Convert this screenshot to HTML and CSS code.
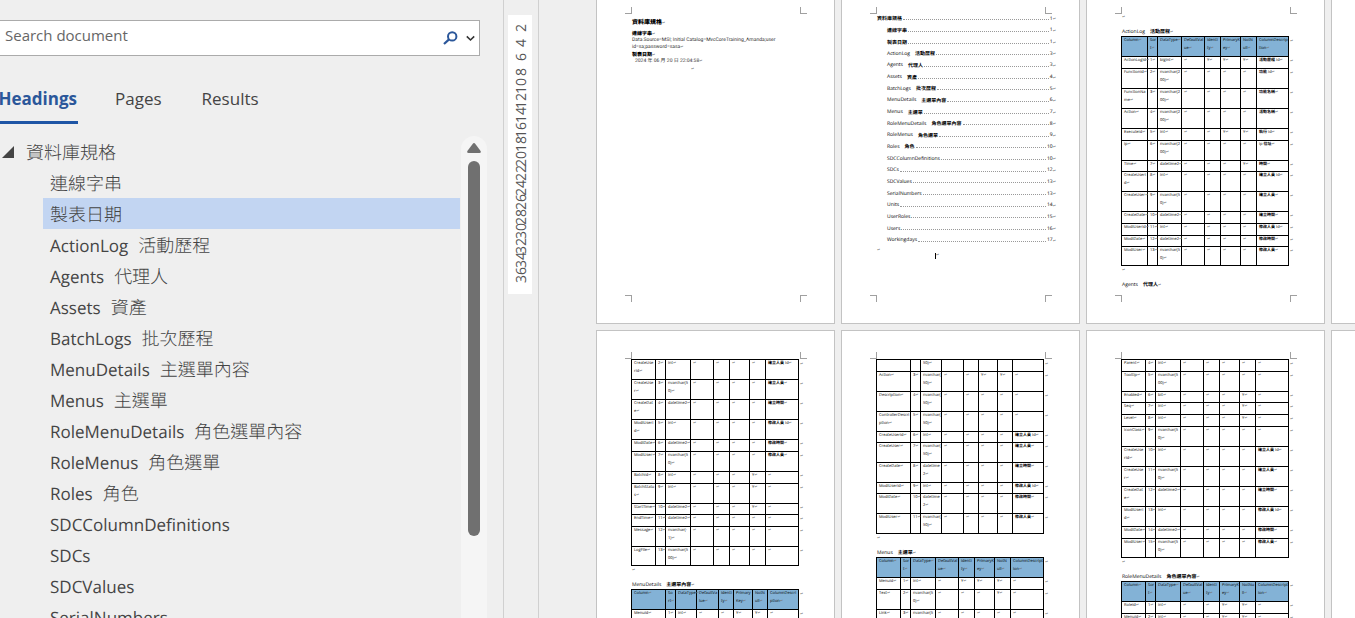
FILE: index.html
```html
<!DOCTYPE html>
<html lang="zh-Hant">
<head>
<meta charset="utf-8">
<meta name="viewport" content="width=device-width, initial-scale=1">
<title>資料庫規格</title>
<link rel="stylesheet" href="styles.css">
</head>
<body>
<aside class="nav">
  <form class="search">
    <input class="search-text" type="text" placeholder="Search document" aria-label="Search document">
    <button class="icon-button" type="button" aria-label="Search">
      <svg width="15" height="14" viewBox="0 0 15 14"><circle cx="9.2" cy="5.4" r="4.2" fill="none" stroke="#2b579a" stroke-width="2"/><path d="M6 8.4 1 13" fill="none" stroke="#2b579a" stroke-width="2.2"/></svg>
    </button>
    <button class="icon-button" type="button" aria-label="Search options">
      <svg width="9" height="7" viewBox="0 0 9 7"><path d="M.8 1.4 4.5 5 8.2 1.4" fill="none" stroke="#333" stroke-width="1.6"/></svg>
    </button>
  </form>
  <div class="tabs" role="tablist">
    <button class="tab active" type="button" role="tab" aria-selected="true">Headings</button>
    <button class="tab" type="button" role="tab" aria-selected="false">Pages</button>
    <button class="tab" type="button" role="tab" aria-selected="false">Results</button>
  </div>
  <div class="outline">
    <div class="tree">
      <a class="root" href="#"><svg width="12" height="12" viewBox="0 0 12 12"><path d="M12 0v12H0z" fill="#444"/></svg><b>資料庫規格</b></a>
      <a href="#"><b>連線字串</b></a>
      <a class="selected" href="#"><b>製表日期</b></a>
      <a href="#">ActionLog<b>活動歷程</b></a>
      <a href="#">Agents<b>代理人</b></a>
      <a href="#">Assets<b>資產</b></a>
      <a href="#">BatchLogs<b>批次歷程</b></a>
      <a href="#">MenuDetails<b>主選單內容</b></a>
      <a href="#">Menus<b>主選單</b></a>
      <a href="#">RoleMenuDetails<b>角色選單內容</b></a>
      <a href="#">RoleMenus<b>角色選單</b></a>
      <a href="#">Roles<b>角色</b></a>
      <a href="#">SDCColumnDefinitions</a>
      <a href="#">SDCs</a>
      <a href="#">SDCValues</a>
      <a href="#">SerialNumbers</a>
    </div>
    <div class="scrollbar">
      <svg width="14" height="10" viewBox="0 0 14 10"><path d="M5.6 1Q7-.8 8.400 1L13.600 8Q14.400 10 12.500 10H1.500Q-.4 10 .4 8z" fill="#707070"/></svg>
      <div class="thumb"></div>
    </div>
  </div>
</aside>
<div class="ruler">
  <div class="scale"><span>36</span><span>34</span><span>32</span><span>30</span><span>28</span><span>26</span><span>24</span><span>22</span><span>20</span><span>18</span><span>16</span><span>14</span><span>12</span><span>10</span><span>8</span><span>6</span><span>4</span><span>2</span></div>
</div>
<main class="canvas">
  <section class="page cover">
    <i class="c tl"></i><i class="c tr"></i><i class="c bl"></i><i class="c br"></i>
    <h1>資料庫規格</h1>
    <h2>連線字串</h2>
    <p>Data Source=MSI; Initial Catalog=MvcCoreTraining_Amanda;user<br>id=sa;password=sasa<span class="m"></span></p>
    <h2>製表日期</h2>
    <p class="date">2024 年 06 月 20 日 22:04:58<span class="m"></span></p>
    <p class="end"><span class="m"></span></p>
  </section>

  <section class="page">
    <i class="c tl"></i><i class="c tr"></i><i class="c bl"></i><i class="c br"></i>
    <nav class="toc">
      <a class="cjk top" href="#"><b>資料庫規格</b><i></i>1</a>
      <a class="cjk" href="#"><b>連線字串</b><i></i>1</a>
      <a class="cjk" href="#"><b>製表日期</b><i></i>1</a>
      <a href="#">ActionLog<b>活動歷程</b><i></i>3</a>
      <a href="#">Agents<b>代理人</b><i></i>3</a>
      <a href="#">Assets<b>資產</b><i></i>4</a>
      <a href="#">BatchLogs<b>批次歷程</b><i></i>5</a>
      <a href="#">MenuDetails<b>主選單內容</b><i></i>6</a>
      <a href="#">Menus<b>主選單</b><i></i>7</a>
      <a href="#">RoleMenuDetails<b>角色選單內容</b><i></i>8</a>
      <a href="#">RoleMenus<b>角色選單</b><i></i>9</a>
      <a href="#">Roles<b>角色</b><i></i>10</a>
      <a href="#">SDCColumnDefinitions<i></i>10</a>
      <a href="#">SDCs<i></i>12</a>
      <a href="#">SDCValues<i></i>13</a>
      <a href="#">SerialNumbers<i></i>13</a>
      <a href="#">Units<i></i>14</a>
      <a href="#">UserRoles<i></i>15</a>
      <a href="#">Users<i></i>16</a>
      <a href="#">Workingdays<i></i>17</a>
    </nav>
    <p class="blank"><span class="m"></span></p>
    <p class="cursor"><span class="m"></span></p>
  </section>

  <section class="page">
    <i class="c tl"></i><i class="c tr"></i><i class="c bl"></i><i class="c br"></i>
    <p class="blank first"><span class="m"></span></p>
    <h3>ActionLog<b>活動歷程</b></h3>
    <table class="sizes-c">
      <colgroup><col><col><col><col><col><col><col><col><col></colgroup>
      <thead><tr><th>Column<th>Sor<br>t<th>DataType<th>DefaultVal<br>ue<th>Identi<br>ty<th>PrimaryK<br>ey<th>NotN<br>ull<th>ColumnDescrip<br>tion</tr></thead>
      <tbody>
      <tr><td>ActionLogId<td>1<td>bigint<td><td>Y<td>Y<td>Y<td><b>活動歷程</b> Id</tr>
      <tr><td>FunctionId<td>2<td>nvarchar(2<br>00)<td><td><td><td><td><b>功能</b> Id</tr>
      <tr><td>FunctionNa<br>me<td>3<td>nvarchar(2<br>00)<td><td><td><td><td><b>功能名稱</b></tr>
      <tr><td>Action<td>4<td>nvarchar(2<br>00)<td><td><td><td><td><b>活動名稱</b></tr>
      <tr><td>ExecuteId<td>5<td>int<td><td><td>Y<td>Y<td><b>執行</b> Id</tr>
      <tr><td>Ip<td>6<td>nvarchar(2<br>00)<td><td><td><td><td>Ip <b>位址</b></tr>
      <tr class="tight"><td>Time<td>7<td>datetime2<td><td><td><td>Y<td><b>時間</b></tr>
      <tr><td>CreateUserI<br>d<td>8<td>int<td><td><td><td><td><b>建立人員</b> Id</tr>
      <tr><td>CreateUser<td>9<td>nvarchar(5<br>0)<td><td><td><td><td><b>建立人員</b></tr>
      <tr><td>CreateDate<td>10<td>datetime2<td><td><td><td><td><b>建立時間</b></tr>
      <tr><td>ModiUserId<td>11<td>int<td><td><td><td><td><b>修改人員</b> Id</tr>
      <tr class="tight"><td>ModiDate<td>12<td>datetime2<td><td><td><td><td><b>修改時間</b></tr>
      <tr class="tight"><td>ModiUser<td>13<td>nvarchar(5<br>0)<td><td><td><td><td><b>修改人員</b></tr>
      </tbody>
    </table>
    <p class="blank"><span class="m"></span></p>
    <h3>Agents<b>代理人</b></h3>
  </section>
  <section class="page"></section>

  <section class="page">
    <i class="c tl"></i><i class="c tr"></i><i class="c bl"></i><i class="c br"></i>
    <table class="sizes-a">
      <colgroup><col><col><col><col><col><col><col><col><col></colgroup>
      <tbody>
      <tr><td>CreateUse<br>rId<td>2<td>int<td><td><td><td><td><b>建立人員</b> Id</tr>
      <tr><td>CreateUse<br>r<td>3<td>nvarchar(5<br>0)<td><td><td><td><td><b>建立人員</b></tr>
      <tr><td>CreateDat<br>e<td>4<td>datetime2<td><td><td><td><td><b>建立時間</b></tr>
      <tr><td>ModiUserI<br>d<td>5<td>int<td><td><td><td><td><b>修改人員</b> Id</tr>
      <tr><td>ModiDate<td>6<td>datetime2<td><td><td><td><td><b>修改時間</b></tr>
      <tr><td>ModiUser<td>7<td>nvarchar(5<br>0)<td><td><td><td><td><b>修改人員</b></tr>
      <tr><td>BatchId<td>8<td>int<td><td><td><td>Y<td></tr>
      <tr><td>BatchStatu<br>s<td>9<td>int<td><td><td><td>Y<td></tr>
      <tr class="tight"><td>StartTime<td>10<td>datetime2<td><td><td><td>Y<td></tr>
      <tr><td>EndTime<td>11<td>datetime2<td><td><td><td><td></tr>
      <tr><td>Message<td>12<td>nvarchar(-<br>1)<td><td><td><td><td></tr>
      <tr class="tight"><td>LogFile<td>13<td>nvarchar(5<br>00)<td><td><td><td><td></tr>
      </tbody>
    </table>
    <p class="blank"><span class="m"></span></p>
    <h3>MenuDetails<b>主選單內容</b></h3>
    <table class="sizes-b">
      <colgroup><col><col><col><col><col><col><col><col><col></colgroup>
      <thead><tr><th>Column<th>So<br>rt<th>DataType<th>DefaultVa<br>lue<th>Identi<br>ty<th>Primary<br>Key<th>NotN<br>ull<th>ColumnDescri<br>ption</tr></thead>
      <tbody>
      <tr><td>MenuId<td>1<td>int<td><td><td>Y<td>Y<td></tr>
      </tbody>
    </table>
  </section>

  <section class="page">
    <i class="c tl"></i><i class="c tr"></i><i class="c bl"></i><i class="c br"></i>
    <table class="sizes-b">
      <colgroup><col><col><col><col><col><col><col><col><col></colgroup>
      <tbody>
      <tr class="rest"><td><td><td>50)<td><td><td><td><td></tr>
      <tr><td>Action<td>3<td>nvarchar(<br>50)<td><td><td>Y<td>Y<td></tr>
      <tr><td>Description<td>4<td>nvarchar(<br>50)<td><td><td><td><td></tr>
      <tr><td>ControllerDescri<br>ption<td>5<td>nvarchar(<br>50)<td><td><td><td><td></tr>
      <tr class="tight"><td>CreateUserId<td>6<td>int<td><td><td><td><td><b>建立人員</b> Id</tr>
      <tr><td>CreateUser<td>7<td>nvarchar(<br>50)<td><td><td><td><td><b>建立人員</b></tr>
      <tr><td>CreateDate<td>8<td>datetime<br>2<td><td><td><td><td><b>建立時間</b></tr>
      <tr class="tight"><td>ModiUserId<td>9<td>int<td><td><td><td><td><b>修改人員</b> Id</tr>
      <tr><td>ModiDate<td>10<td>datetime<br>2<td><td><td><td><td><b>修改時間</b></tr>
      <tr><td>ModiUser<td>11<td>nvarchar(<br>50)<td><td><td><td><td><b>修改人員</b></tr>
      </tbody>
    </table>
    <p class="blank"><span class="m"></span></p>
    <h3>Menus<b>主選單</b></h3>
    <table class="sizes-a">
      <colgroup><col><col><col><col><col><col><col><col><col></colgroup>
      <thead><tr><th>Column<th>Sor<br>t<th>DataType<th>DefaultVal<br>ue<th>Identi<br>ty<th>PrimaryK<br>ey<th>NotN<br>ull<th>ColumnDescript<br>ion</tr></thead>
      <tbody>
      <tr><td>MenuId<td>1<td>int<td><td>Y<td>Y<td>Y<td></tr>
      <tr><td>Text<td>2<td>nvarchar(5<br>0)<td><td><td><td>Y<td></tr>
      <tr><td>Link<td>3<td>nvarchar(5<br>00)<td><td><td><td><td></tr>
      </tbody>
    </table>
  </section>

  <section class="page">
    <i class="c tl"></i><i class="c tr"></i><i class="c bl"></i><i class="c br"></i>
    <table class="sizes-a">
      <colgroup><col><col><col><col><col><col><col><col><col></colgroup>
      <tbody>
      <tr><td>Parent<td>4<td>int<td><td><td><td><td></tr>
      <tr><td>Tooltip<td>5<td>nvarchar(5<br>00)<td><td><td><td><td></tr>
      <tr class="tight"><td>Enabled<td>6<td>bit<td><td><td><td>Y<td></tr>
      <tr><td>Seq<td>7<td>int<td><td><td><td>Y<td></tr>
      <tr><td>Level<td>8<td>int<td><td><td><td>Y<td></tr>
      <tr><td>IconClass<td>9<td>nvarchar(5<br>0)<td><td><td><td><td></tr>
      <tr><td>CreateUse<br>rId<td>10<td>int<td><td><td><td><td><b>建立人員</b> Id</tr>
      <tr><td>CreateUse<br>r<td>11<td>nvarchar(5<br>0)<td><td><td><td><td><b>建立人員</b></tr>
      <tr><td>CreateDat<br>e<td>12<td>datetime2<td><td><td><td><td><b>建立時間</b></tr>
      <tr><td>ModiUserI<br>d<td>13<td>int<td><td><td><td><td><b>修改人員</b> Id</tr>
      <tr><td>ModiDate<td>14<td>datetime2<td><td><td><td><td><b>修改時間</b></tr>
      <tr class="tight"><td>ModiUser<td>15<td>nvarchar(5<br>0)<td><td><td><td><td><b>修改人員</b></tr>
      </tbody>
    </table>
    <p class="blank"><span class="m"></span></p>
    <h3>RoleMenuDetails<b>角色選單內容</b></h3>
    <table class="sizes-a">
      <colgroup><col><col><col><col><col><col><col><col><col></colgroup>
      <thead><tr><th>Column<th>Sor<br>t<th>DataType<th>DefaultVal<br>ue<th>Identi<br>ty<th>PrimaryK<br>ey<th>NotNu<br>ll<th>ColumnDescript<br>ion</tr></thead>
      <tbody>
      <tr><td>RoleId<td>1<td>int<td><td><td>Y<td>Y<td></tr>
      <tr><td>MenuId<td>2<td>int<td><td><td>Y<td>Y<td></tr>
      </tbody>
    </table>
  </section>
  <section class="page"></section>
</main>
</body>
</html>
```

FILE: styles.css
```css
* { box-sizing: border-box; }

body {
  margin: 0;
  height: 100vh;
  display: flex;
  overflow: hidden;
  background: #efefef;
  color: #444;
  font-family: "Open Sans", "Noto Sans CJK TC", sans-serif;
  text-rendering: geometricPrecision;
}

a { color: inherit; text-decoration: none; }
button { border: 0; padding: 0; background: none; font: inherit; color: inherit; }

/* Navigation pane */
.nav {
  flex: 0 0 504px;
  display: flex;
  flex-direction: column;
  border-right: 1px solid #d0d0d0;
  overflow: hidden;
}

.search {
  display: flex;
  align-items: center;
  gap: 8px;
  height: 36px;
  margin: 20px 23px 0 0;
  padding-right: 4px;
  border: 1px solid #ababab;
  border-left: 0;
  background: #fff;
}
.search-text {
  flex: 1;
  min-width: 0;
  border: 0;
  outline: 0;
  padding: 0 0 6px 5px;
  background: none;
  font: 15px "Open Sans", sans-serif;
}
.search-text::placeholder { color: #666; opacity: 1; }
.icon-button { display: flex; }

.tabs {
  display: flex;
  gap: 37px;
  margin-top: 22px;
  height: 46px;
  font-size: 17px;
}
.tab { height: 46px; padding-bottom: 6px; }
.tab + .tab + .tab { margin-left: 3px; }
.tab.active {
  width: 78px;
  display: flex;
  justify-content: flex-end;
  align-items: center;
  border-bottom: 3px solid #1e55a5;
  padding: 0 1px 2px 0;
  color: #2b579a;
  font-weight: 700;
}

.outline { flex: 1; min-height: 0; display: flex; margin-top: 12px; }
.tree { flex: 1; overflow: hidden; font-size: 17px; }
.tree a {
  display: flex;
  align-items: center;
  gap: 10px;
  height: 31px;
  margin-left: 43px;
  padding: 1px 0 0 7px;
}
.tree b { font-size: 18px; font-weight: 300; font-family: "Noto Sans CJK TC", sans-serif; }
.tree .root { margin-left: 2px; padding-left: 0; gap: 12px; }
.tree .selected { background: #c2d5f2; }

.scrollbar {
  width: 26px;
  margin: 0 16px 0 1px;
  padding-top: 7px;
  display: flex;
  flex-direction: column;
  align-items: center;
  gap: 8px;
  border-radius: 13px 13px 0 0;
  background: #f5f5f5;
}
.scrollbar svg { flex: none; }
.thumb { width: 12px; height: 79%; border-radius: 6px; background: #707070; }

/* Vertical ruler */
.ruler { flex: 0 0 35px; border-right: 1px solid #d0d0d0; padding: 15px 6px 0 4px; }
.scale {
  height: 279px;
  width: 24px;
  padding: 12px 0 6px;
  display: flex;
  writing-mode: vertical-rl;
  transform: rotate(180deg);
  background: #fff;
  color: #555;
  font-size: 14px;
  line-height: 27px;
}
.scale span { flex: 1 1 0; min-height: 0; display: flex; justify-content: center; }

/* Page thumbnails */
.canvas {
  flex: 1;
  min-width: 0;
  display: grid;
  grid-template-columns: repeat(4, 239px);
  grid-auto-rows: 339px;
  gap: 6px;
  align-content: start;
  margin-top: -15px;
  padding-left: 57px;
  overflow: hidden;
  color: #000;
  font-size: 4px;
  line-height: 8px;
}
.page {
  position: relative;
  padding: 28px 28px 0 34px;
  border: 1px solid #c3c3c3;
  background: #fff;
  overflow: hidden;
}
.page b { font-family: "Noto Sans CJK TC", sans-serif; line-height: 1px; }

/* Margin corner marks */
.c { position: absolute; width: 7px; height: 7px; border: 0 solid #a0a0a0; }
.tl { left: 28px; top: 21px; border-width: 0 1px 1px 0; }
.tr { right: 27px; top: 21px; border-width: 0 0 1px 1px; }
.bl { left: 28px; bottom: 21px; border-width: 1px 1px 0 0; }
.br { right: 27px; bottom: 21px; border-width: 1px 0 0 1px; }

.page h1, .page h2, .page h3, .page p { margin: 0; white-space: nowrap; }
.m::after, .page h1::after, .page h2::after, .page h3::after, .page td::after, .page th::after, .page tr::after, .toc a::after {
  content: "↵";
  color: #777;
  font: 400 4px/1px "DejaVu Sans", sans-serif;
}

.cover { padding-left: 35px; font-family: Roboto, "Noto Sans CJK TC", sans-serif; font-size: 5px; line-height: 7px; }
.cover h1, .cover h2 { font-family: "Noto Sans CJK TC", sans-serif; font-weight: 900; }
.cover h1 { font-size: 6px; line-height: 16px; }
.cover h2 { font-size: 5px; line-height: 7px; }
.cover p { height: 7px; color: #333; }
.cover h2 + p:not(.date) { height: 14px; }
.cover .date { padding-left: 3px; }
.cover .end { padding-left: 59px; margin-top: 1px; }

.toc {
  display: grid;
  grid-auto-rows: 1fr;
  height: 233px;
  margin: -1px -5px 0 1px;
  font-size: 5px;
}
.toc a { display: flex; align-items: center; margin-left: 10px; white-space: nowrap; }
.toc .top { margin-left: 0; }
.toc b { margin-left: 5px; }
.toc .cjk b { margin-left: 0; }
.toc i { flex: 1; height: 3px; margin: 0 1px; border-bottom: 1px dotted #999; }

.blank { height: 12px; padding: 1px 0 0 1px; }
.blank.first { height: 11px; padding-top: 0; }
.toc + .blank { height: 7px; }
.page .cursor { margin-left: 59px; height: 6px; line-height: 6px; border-left: 1px solid #000; }

.page h3 { height: 11px; padding-left: 1px; font-size: 5px; font-weight: 400; line-height: 14px; }
.page h3 b { margin-left: 5px; }

table { width: 174px; table-layout: fixed; border-collapse: collapse; }
td, th {
  padding: 0 0 3px 2px;
  border: 1px solid #000;
  text-align: left;
  vertical-align: top;
  font-weight: 400;
  white-space: nowrap;
}
.tight td { padding-bottom: 2px; }
th { background: #83b2d6; }
.rest td:not(:nth-child(3))::after { content: ""; }
.page tr::after { display: table-cell; padding-left: 1px; line-height: 8px; }

.sizes-a col:nth-child(1) { width: 24px; }
.sizes-a col:nth-child(2) { width: 10px; }
.sizes-a col:nth-child(3) { width: 25px; }
.sizes-a col:nth-child(4) { width: 23px; }
.sizes-a col:nth-child(5) { width: 16px; }
.sizes-a col:nth-child(6) { width: 20px; }
.sizes-a col:nth-child(7) { width: 16px; }
.sizes-a col:nth-child(8) { width: 33px; }

.sizes-b col:nth-child(1) { width: 34px; }
.sizes-b col:nth-child(2) { width: 10px; }
.sizes-b col:nth-child(3) { width: 21px; }
.sizes-b col:nth-child(4) { width: 22px; }
.sizes-b col:nth-child(5) { width: 15px; }
.sizes-b col:nth-child(6) { width: 19px; }
.sizes-b col:nth-child(7) { width: 15px; }
.sizes-b col:nth-child(8) { width: 31px; }

.sizes-c col:nth-child(1) { width: 26px; }
.sizes-c col:nth-child(2) { width: 10px; }
.sizes-c col:nth-child(3) { width: 24px; }
.sizes-c col:nth-child(4) { width: 23px; }
.sizes-c col:nth-child(5) { width: 16px; }
.sizes-c col:nth-child(6) { width: 20px; }
.sizes-c col:nth-child(7) { width: 16px; }
.sizes-c col:nth-child(8) { width: 32px; }
```
